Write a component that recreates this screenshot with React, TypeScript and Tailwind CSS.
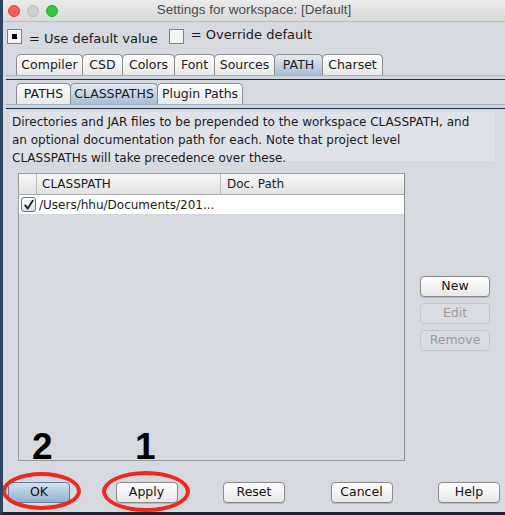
import React from 'react';

const ui = { fontFamily: '"DejaVu Sans", "Noto Sans", sans-serif' };

function Tab({ label, width, selected }: { label: string; width: string; selected?: boolean }) {
  return (
    <div
      className={`${width} -ml-px first:ml-0 h-[21px] flex items-center justify-center rounded-t-[5px] border border-b-0 border-[#8c8c8c] text-[12.5px] text-[#1a1a1a] ${
        selected ? 'bg-gradient-to-b from-[#e3ebf3] to-[#a9bdd2]' : 'bg-gradient-to-b from-[#fdfdfd] to-[#e9e9e9]'
      }`}
    >
      {label}
    </div>
  );
}

function TabLines() {
  return (
    <div className="flex flex-col">
      <div className="h-px bg-[#9db1c6]" />
      <div className="h-[3px] bg-[#cdd5df]" />
      <div className="h-px bg-[#1e2f43]" />
    </div>
  );
}

function Button({ label, width, variant = 'normal' }: { label: string; width: string; variant?: 'normal' | 'default' | 'disabled' }) {
  const look =
    variant === 'default'
      ? 'border-[#5f7fa3] bg-gradient-to-b from-[#d3e1ef] to-[#93b2d1] text-[#111]'
      : variant === 'disabled'
        ? 'border-[#c3c6cc] bg-[#d9dce2] text-[#9b9b9b]'
        : 'border-[#8a8a8a] bg-gradient-to-b from-[#ffffff] to-[#e8e8e8] text-[#111] shadow-[0_1px_0_rgba(0,0,0,0.15)]';
  return (
    <div className={`${width} h-[21px] flex items-center justify-center rounded-[4px] border text-[12.5px] ${look}`}>
      {label}
    </div>
  );
}

function SmallBox({ filled }: { filled?: boolean }) {
  return (
    <div className="w-[15px] h-[15px] border border-[#808080] bg-[#f4f4f4] flex items-center justify-center">
      {filled && <div className="w-[5px] h-[5px] bg-black" />}
    </div>
  );
}

export default function App() {
  return (
    <div
      className="relative w-[505px] h-[515px] overflow-hidden bg-[#d6d9e0] border-l-[3px] border-l-[#2c4661] border-b-[3px] border-b-[#1b2733] flex flex-col"
      style={ui}
    >
      {/* title bar */}
      <div className="relative h-[22px] flex items-center justify-center bg-gradient-to-b from-[#ebebeb] to-[#d9d9d9] border-b border-[#bdbdbd]">
        <div className="absolute left-[5px] top-[5px] flex gap-[7px]">
          <div className="w-[12px] h-[12px] rounded-full bg-[#fc5f57] border border-[#e0443e]" />
          <div className="w-[12px] h-[12px] rounded-full bg-[#cfcfcf] border border-[#bcbcbc]" />
          <div className="w-[12px] h-[12px] rounded-full bg-[#2fc643] border border-[#1fab31]" />
        </div>
        <span className="text-[13.5px] text-[#4a4a4a]" style={{ fontFamily: '"Liberation Sans", Arial, sans-serif' }}>
          Settings for workspace: [Default]
        </span>
      </div>

      {/* legend */}
      <div className="flex items-center mt-[7px] pl-[4px] h-[15px] text-[13px] text-[#1a1a1a]">
        <SmallBox filled />
        <span className="ml-[7px] mt-[4px]">= Use default value</span>
        <div className="ml-[11px]">
          <SmallBox />
        </div>
        <span className="ml-[7px] -mt-[4px]">= Override default</span>
      </div>

      {/* main tabs */}
      <div className="flex mt-[10px] pl-[13px]">
        <Tab label="Compiler" width="w-[67px]" />
        <Tab label="CSD" width="w-[41px]" />
        <Tab label="Colors" width="w-[53px]" />
        <Tab label="Font" width="w-[41px]" />
        <Tab label="Sources" width="w-[61px]" />
        <Tab label="PATH" width="w-[49px]" selected />
        <Tab label="Charset" width="w-[61px]" />
      </div>
      <div className="ml-[3px]">
        <TabLines />
      </div>

      {/* sub tabs */}
      <div className="flex mt-[3px] pl-[13px]">
        <Tab label="PATHS" width="w-[55px]" />
        <Tab label="CLASSPATHS" width="w-[88px]" selected />
        <Tab label="Plugin Paths" width="w-[86px]" />
      </div>
      <div className="ml-[3px]">
        <TabLines />
      </div>

      {/* description */}
      <div className="mt-[3px] ml-[7px] mr-[10px] h-[49px] bg-[#dfe2e8] pl-[2px] pt-[1px] text-[12px] leading-[18px] text-[#1a1a1a]">
        Directories and JAR files to be prepended to the workspace CLASSPATH, and
        <br />
        an optional documentation path for each. Note that project level
        <br />
        CLASSPATHs will take precedence over these.
      </div>

      {/* table + side buttons */}
      <div className="flex mt-[12px] ml-[15px]">
        <div className="w-[387px] h-[288px] border border-[#9a9a9a] border-r-[#8a8a8a] flex flex-col">
          <div className="h-[21px] flex bg-gradient-to-b from-[#f8f8f8] to-[#e2e2e2] border-b border-[#a9a9a9] text-[12px] text-[#1a1a1a]">
            <div className="w-[18px] border-r border-[#b8b8b8]" />
            <div className="w-[184px] border-r border-[#b8b8b8] flex items-center pl-[5px]">CLASSPATH</div>
            <div className="flex-1 flex items-center pl-[6px]">Doc. Path</div>
          </div>
          <div className="h-[19px] bg-white flex items-center pl-[2px] text-[12px] text-[#1a1a1a]">
            <div className="w-[15px] h-[15px] rounded-[3px] border border-[#5b7495] bg-gradient-to-b from-[#ffffff] to-[#d6e2ef] flex items-center justify-center">
              <svg width="12" height="12" viewBox="0 0 12 12">
                <path d="M2.2 6.4 L4.8 9.6 L9.8 1.6" fill="none" stroke="#1c1c1c" strokeWidth="1.8" strokeLinecap="round" strokeLinejoin="round" />
              </svg>
            </div>
            <span className="ml-[3px]">/Users/hhu/Documents/201...</span>
          </div>
        </div>
        <div className="ml-[15px] mt-[103px] flex flex-col gap-[6px]">
          <Button label="New" width="w-[70px]" />
          <Button label="Edit" width="w-[70px]" variant="disabled" />
          <Button label="Remove" width="w-[70px]" variant="disabled" />
        </div>
      </div>

      {/* bottom buttons */}
      <div className="flex justify-between mt-[21px] pl-[5px] pr-[5px]">
        <Button label="OK" width="w-[62px]" variant="default" />
        <Button label="Apply" width="w-[62px]" />
        <Button label="Reset" width="w-[62px]" />
        <Button label="Cancel" width="w-[62px]" />
        <Button label="Help" width="w-[62px]" />
      </div>

      {/* annotations */}
      <div
        className="absolute left-[29px] top-[428px] text-[37px] font-bold leading-none text-black"
        style={{ fontFamily: '"Liberation Sans", Arial, sans-serif' }}
      >
        2
      </div>
      <div
        className="absolute left-[132px] top-[428px] text-[37px] font-bold leading-none text-black"
        style={{ fontFamily: '"Liberation Sans", Arial, sans-serif' }}
      >
        1
      </div>
      <div className="absolute left-[-1px] top-[472px] w-[79px] h-[38px] rounded-[50%] border-4 border-[#f2261b]" />
      <div className="absolute left-[99px] top-[471px] w-[88px] h-[41px] rounded-[50%] border-4 border-[#f2261b]" />
    </div>
  );
}
